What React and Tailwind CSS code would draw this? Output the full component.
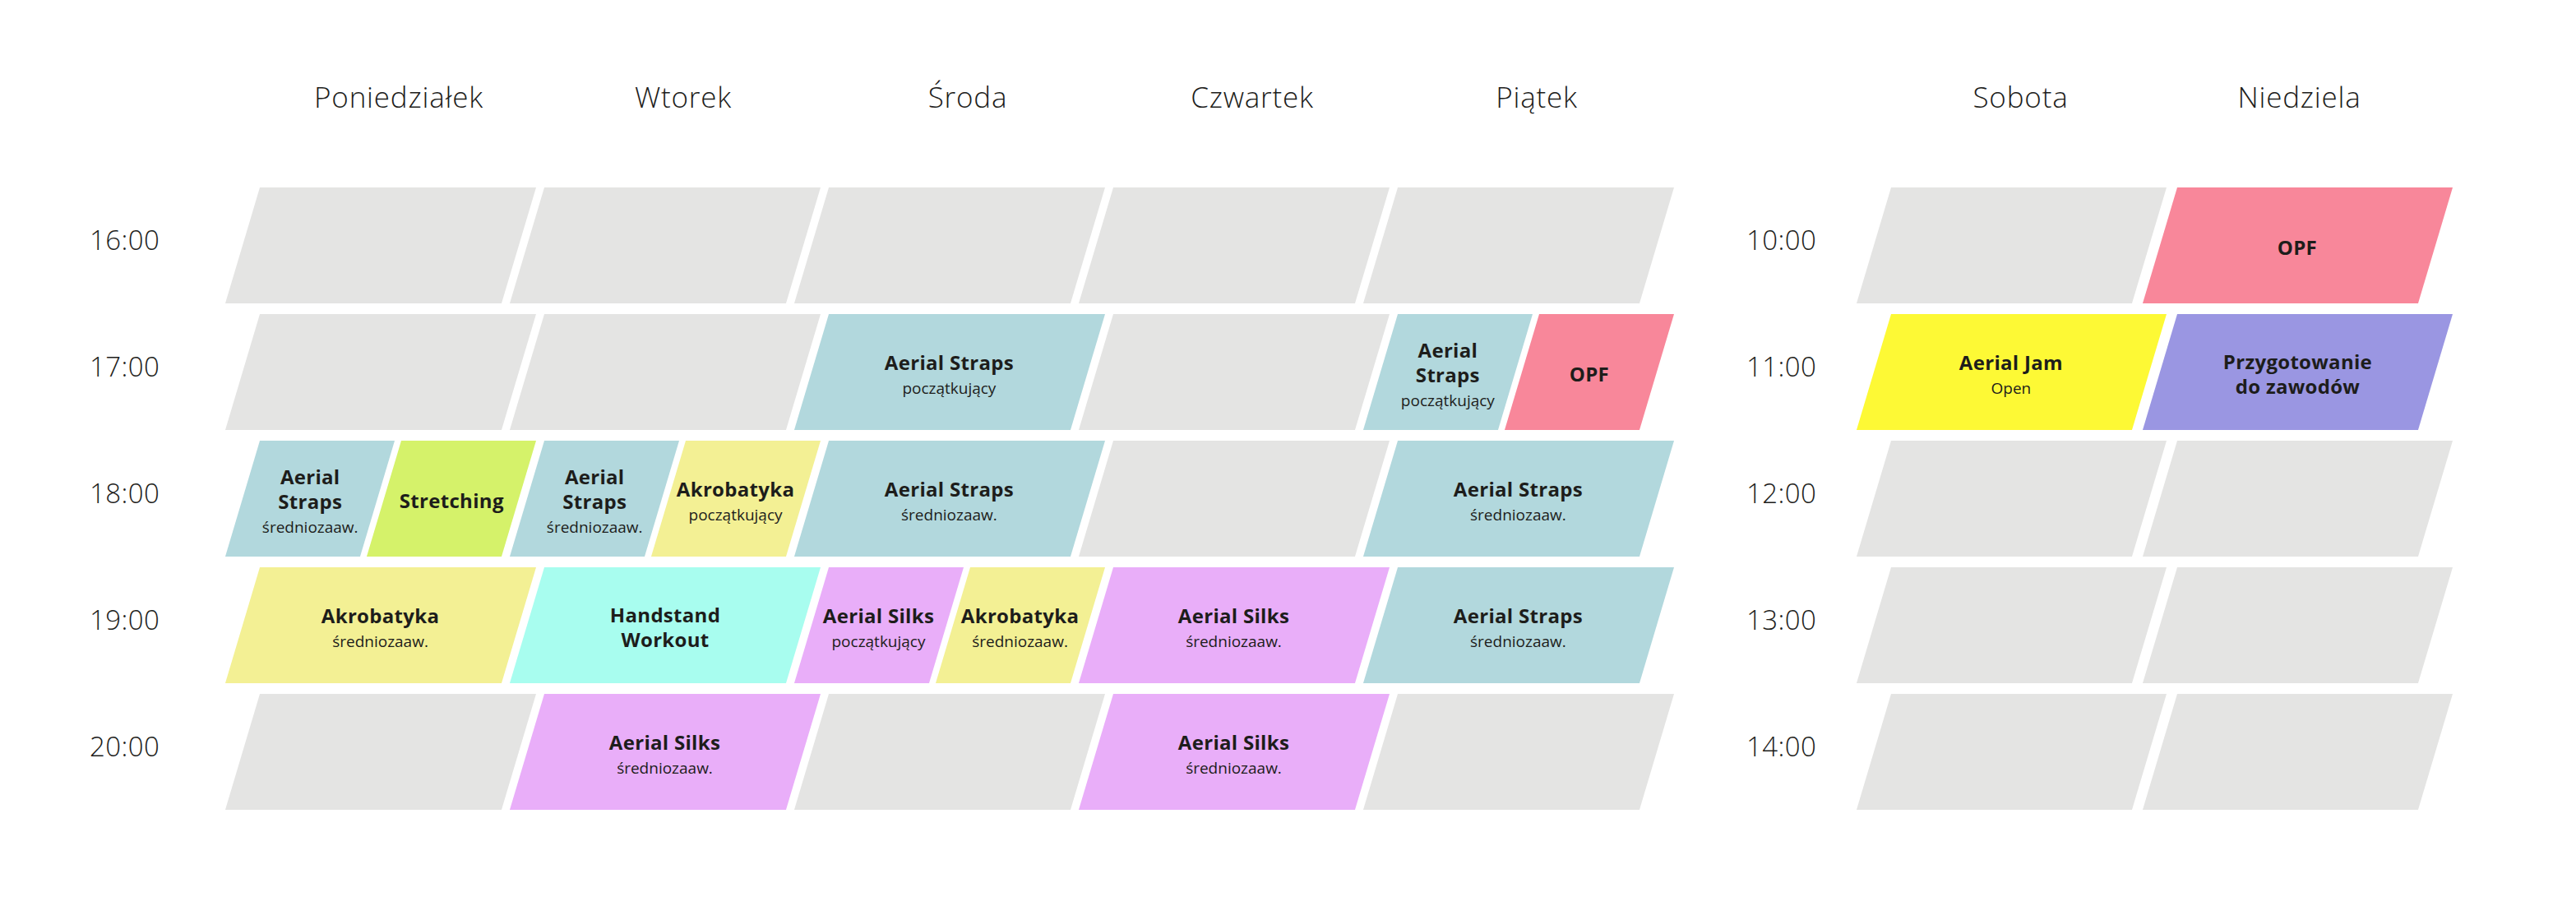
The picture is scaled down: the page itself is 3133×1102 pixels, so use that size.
const bg = {
  grey: 'bg-[#e4e4e3]',
  blue: 'bg-[#b2d8dd]',
  pink: 'bg-[#f8879a]',
  lime: 'bg-[#d5f26a]',
  sand: 'bg-[#f3f094]',
  mint: 'bg-[#a8fdef]',
  lilac: 'bg-[#e9aef9]',
  yellow: 'bg-[#fdf935]',
  violet: 'bg-[#9a96e2]',
};

const weekdays = ['Poniedziałek', 'Wtorek', 'Środa', 'Czwartek', 'Piątek'];

const weekdayRows = [
  { time: '16:00', cells: [[], [], [], [], []] },
  {
    time: '17:00',
    cells: [
      [],
      [],
      [{ t: ['Aerial Straps'], s: 'początkujący', c: 'blue' }],
      [],
      [
        { t: ['Aerial', 'Straps'], s: 'początkujący', c: 'blue' },
        { t: ['OPF'], c: 'pink' },
      ],
    ],
  },
  {
    time: '18:00',
    cells: [
      [
        { t: ['Aerial', 'Straps'], s: 'średniozaaw.', c: 'blue' },
        { t: ['Stretching'], c: 'lime' },
      ],
      [
        { t: ['Aerial', 'Straps'], s: 'średniozaaw.', c: 'blue' },
        { t: ['Akrobatyka'], s: 'początkujący', c: 'sand' },
      ],
      [{ t: ['Aerial Straps'], s: 'średniozaaw.', c: 'blue' }],
      [],
      [{ t: ['Aerial Straps'], s: 'średniozaaw.', c: 'blue' }],
    ],
  },
  {
    time: '19:00',
    cells: [
      [{ t: ['Akrobatyka'], s: 'średniozaaw.', c: 'sand' }],
      [{ t: ['Handstand', 'Workout'], c: 'mint' }],
      [
        { t: ['Aerial Silks'], s: 'początkujący', c: 'lilac' },
        { t: ['Akrobatyka'], s: 'średniozaaw.', c: 'sand' },
      ],
      [{ t: ['Aerial Silks'], s: 'średniozaaw.', c: 'lilac' }],
      [{ t: ['Aerial Straps'], s: 'średniozaaw.', c: 'blue' }],
    ],
  },
  {
    time: '20:00',
    cells: [
      [],
      [{ t: ['Aerial Silks'], s: 'średniozaaw.', c: 'lilac' }],
      [],
      [{ t: ['Aerial Silks'], s: 'średniozaaw.', c: 'lilac' }],
      [],
    ],
  },
];

const weekendRows = [
  { time: '10:00', cells: [[], [{ t: ['OPF'], c: 'pink' }]] },
  {
    time: '11:00',
    cells: [
      [{ t: ['Aerial Jam'], s: 'Open', c: 'yellow' }],
      [{ t: ['Przygotowanie', 'do zawodów'], c: 'violet' }],
    ],
  },
  { time: '12:00', cells: [[], []] },
  { time: '13:00', cells: [[], []] },
  { time: '14:00', cells: [[], []] },
];

function Slot({ parts, width }) {
  return (
    <div className={`h-[141px] ${width} shrink-0 -skew-x-[16.6deg] flex gap-2`}>
      {parts.length === 0 && <div className={`flex-1 ${bg.grey}`} />}
      {parts.map((p, i) => (
        <div key={i} className={`flex-1 flex items-center justify-center ${bg[p.c]}`}>
          <div className="skew-x-[16.6deg] text-center text-[#1d1d1b] pt-1">
            {p.t.map((line) => (
              <div key={line} className="text-[24px] leading-[30px] font-bold tracking-[0.3px] whitespace-nowrap">
                {line}
              </div>
            ))}
            {p.s && <div className="mt-1 text-[19px] leading-[24px] whitespace-nowrap">{p.s}</div>}
          </div>
        </div>
      ))}
    </div>
  );
}

function TimeLabel({ time, width }) {
  return (
    <div className={`${width} shrink-0 pb-[14px] text-[33px] leading-[40px] font-light tracking-[0.4px] text-[#1d1d1b]`}>
      {time}
    </div>
  );
}

export default function App() {
  return (
    <div className="w-[3133px] h-[1102px] bg-white flex pl-[109px] pt-[95px] [font-family:'Open_Sans',sans-serif]">
      {/* Mon - Fri */}
      <div className="flex flex-col">
        <div className="flex h-[46px] pl-[186px] gap-[10px]">
          {weekdays.map((d) => (
            <div key={d} className="w-[336px] pl-[44px] text-center text-[35px] leading-[46px] font-light tracking-[0.8px] text-[#1d1d1b]">
              {d}
            </div>
          ))}
        </div>
        <div className="mt-[87px] flex flex-col gap-[13px]">
          {weekdayRows.map((row) => (
            <div key={row.time} className="flex items-center">
              <TimeLabel time={row.time} width="w-[186px]" />
              <div className="flex gap-[10px]">
                {row.cells.map((parts, i) => (
                  <Slot key={i} parts={parts} width="w-[336px]" />
                ))}
              </div>
            </div>
          ))}
        </div>
      </div>

      {/* Sat - Sun */}
      <div className="ml-[109px] flex flex-col">
        <div className="flex h-[46px] pl-[155px] gap-[13px]">
          <div className="w-[335px] pl-[22px] text-center text-[35px] leading-[46px] font-light tracking-[0.8px] text-[#1d1d1b]">Sobota</div>
          <div className="w-[335px] pl-[4px] text-center text-[35px] leading-[46px] font-light tracking-[0.8px] text-[#1d1d1b]">Niedziela</div>
        </div>
        <div className="mt-[87px] flex flex-col gap-[13px]">
          {weekendRows.map((row) => (
            <div key={row.time} className="flex items-center">
              <TimeLabel time={row.time} width="w-[155px]" />
              <div className="flex gap-[13px]">
                {row.cells.map((parts, i) => (
                  <Slot key={i} parts={parts} width="w-[335px]" />
                ))}
              </div>
            </div>
          ))}
        </div>
      </div>
    </div>
  );
}
